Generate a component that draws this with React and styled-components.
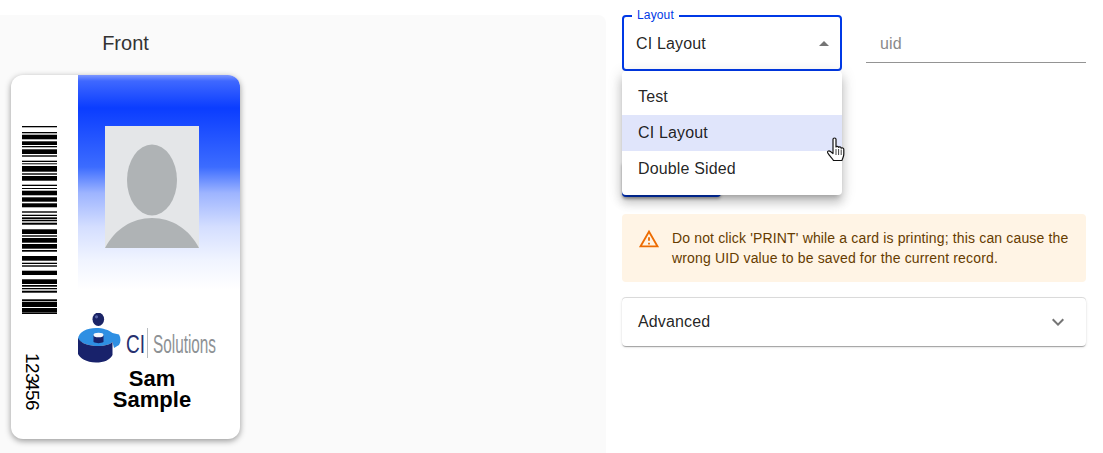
import React from 'react';
import styled, { createGlobalStyle } from 'styled-components';

const GlobalStyle = createGlobalStyle`
  html, body {
    margin: 0;
    padding: 0;
    background: #fff;
    font-family: "Liberation Sans", Arial, sans-serif;
    overflow: hidden;
  }
  * { box-sizing: border-box; }
`;

const Page = styled.div`
  display: flex;
  width: 1103px;
  height: 453px;
  padding-top: 15px;
`;

const PreviewPanel = styled.section`
  width: 606px;
  height: 438px;
  background: #fafafa;
  border-top-right-radius: 8px;
  padding: 13px 0 0 11px;
`;

const CardColumn = styled.div`
  width: 229px;
`;

const CardTitle = styled.h2`
  margin: 0 0 17px;
  font-size: 20px;
  line-height: 30px;
  font-weight: 400;
  text-align: center;
  color: #333;
`;

const Card = styled.div`
  display: grid;
  grid-template-columns: 67px 162px;
  height: 364px;
  background: #fff;
  border-radius: 12px;
  overflow: hidden;
  box-shadow: 0 2px 6px rgba(0, 0, 0, 0.4);
`;

const StubColumn = styled.div`
  display: flex;
  flex-direction: column;
  align-items: flex-start;
  padding: 51px 0 0 11px;
`;

const NumberText = styled.div`
  margin: 39px 0 0 2px;
  writing-mode: vertical-rl;
  font-size: 19px;
  line-height: 16px;
  color: #000;
  letter-spacing: -0.6px;
  span { margin-top: -3px; }
`;

const MainColumn = styled.div`
  display: flex;
  flex-direction: column;
  align-items: flex-start;
`;

const Banner = styled.div`
  width: 100%;
  height: 215px;
  padding: 51px 14px 0 0;
  display: flex;
  justify-content: center;
  align-items: flex-start;
  background: linear-gradient(
    #7d97ff 0,
    #3f68ff 6px,
    #0b3dff 33px,
    #3c6cff 92px,
    #9db4ff 118px,
    #d4deff 152px,
    #f0f4ff 185px,
    #fff 215px
  );
`;

const LogoSlot = styled.div`
  height: 55px;
  margin-top: 23px;
  svg { display: block; }
`;

const Name = styled.div`
  width: 148px;
  font-weight: 700;
  font-size: 22px;
  line-height: 21px;
  text-align: center;
  color: #000;
`;

const FormColumn = styled.section`
  position: relative;
  width: 464px;
  margin-left: 16px;
  color: rgba(0, 0, 0, 0.87);
  letter-spacing: 0.15px;
`;

const FieldRow = styled.div`
  display: flex;
  gap: 24px;
`;

const SelectField = styled.div`
  position: relative;
  width: 220px;
  height: 56px;
  border: 2px solid #0039e6;
  border-radius: 4px;
  display: flex;
  align-items: center;
  justify-content: space-between;
  padding: 1px 11px 0 12px;
  font-size: 16px;
`;

const FieldLabel = styled.label`
  position: absolute;
  top: -9px;
  left: 8px;
  padding: 0 5px;
  background: #fff;
  font-size: 12px;
  line-height: 14px;
  color: #0039e6;
`;

const Caret = styled.span`
  width: 0;
  height: 0;
  margin-top: -1px;
  border-left: 5px solid transparent;
  border-right: 5px solid transparent;
  border-bottom: 5px solid #757575;
`;

const TextField = styled.div`
  width: 220px;
  height: 48px;
  border-bottom: 1px solid #949494;
  padding: 19px 14px 0;
  font-size: 16px;
  line-height: 19px;
  color: #8a8a8a;
`;

const PrintButton = styled.button`
  display: block;
  width: 99px;
  height: 36px;
  margin-top: 90px;
  border: 0;
  border-radius: 4px;
  background: #0036c9;
  box-shadow: 0 2px 3px rgba(0, 0, 0, 0.3);
`;

const Alert = styled.div`
  display: flex;
  gap: 12px;
  height: 68px;
  margin-top: 17px;
  padding: 14px 16px 0 16px;
  border-radius: 4px;
  background: #fff4e5;
  color: #663c00;
  font-size: 14px;
  line-height: 20px;
  svg { flex: none; }
`;

const Accordion = styled.div`
  display: flex;
  align-items: center;
  justify-content: space-between;
  height: 48px;
  margin-top: 16px;
  padding: 0 16px;
  border-radius: 4px;
  background: #fff;
  font-size: 16px;
  box-shadow: 0 -1px 0 rgba(0, 0, 0, 0.13), 0 2px 1px -1px rgba(0, 0, 0, 0.2), 0 1px 1px 0 rgba(0, 0, 0, 0.14), 0 1px 3px 0 rgba(0, 0, 0, 0.12);
`;

const Menu = styled.ul`
  position: absolute;
  top: 56px;
  left: 0;
  width: 220px;
  margin: 0;
  padding: 8px 0;
  list-style: none;
  background: #fff;
  border-radius: 4px;
  box-shadow: 0 5px 5px -3px rgba(0, 0, 0, 0.2), 0 8px 10px 1px rgba(0, 0, 0, 0.14), 0 3px 14px 2px rgba(0, 0, 0, 0.12);
`;

const MenuItem = styled.li`
  height: 36px;
  padding: 0 16px;
  font-size: 16px;
  line-height: 36px;
  background: ${(p) => (p.$active ? '#e0e5fb' : 'transparent')};
`;

const HandCursor = styled.svg`
  position: absolute;
  top: 122px;
  left: 205px;
`;

// [top, height] of each barcode stripe, in px from the top of the code
const BARS = [
  [0, 1.3], [6, 1.3], [8.7, 4.6], [15.3, 3.7], [20, 1.3], [23.3, 4.7], [29.3, 1.4], [34.7, 1.3],
  [37.3, 1], [40, 5.7], [47.3, 1.4], [50, 4.7], [58.7, 1.3], [62, 1], [64.7, 4.6], [71.3, 4.4],
  [77.3, 4], [85.3, 1.4], [88.7, 1.3], [91.3, 2], [94, 1.3], [96.7, 2], [103.3, 4.7], [109.3, 1.4],
  [112, 4.7], [118, 4.7], [124, 1.7], [130, 4.7], [136.7, 1.3], [139.3, 1.4], [144.7, 4.3], [153.3, 4.7],
  [159, 1.7], [162, 1.3], [164.7, 2], [173.3, 2], [176, 5], [182, 4.7], [187, 1],
];

const Barcode = () => (
  <svg width="35" height="188" viewBox="0 0 35 188">
    {BARS.map(([y, h], i) => (
      <rect key={i} x="0" y={y} width="35" height={h} fill="#000" />
    ))}
  </svg>
);

const Portrait = () => (
  <svg width="94" height="122" viewBox="0 0 94 122">
    <rect width="94" height="122" fill="#e4e6e8" />
    <ellipse cx="47" cy="54" rx="25" ry="35.5" fill="#afb3b5" />
    <path d="M0 122 C10 103 27 92 47 92 C67 92 84 103 94 122 Z" fill="#afb3b5" />
  </svg>
);

const Logo = () => (
  <svg width="142" height="55" viewBox="0 0 142 55">
    <ellipse cx="20.300" cy="6.300" rx="5.800" ry="6.700" fill="#1b2466" />
    <circle cx="18.500" cy="3.800" r="1.600" fill="#5a66a8" />
    <path d="M0 25.500 C1 19 9 15 18 15 C25 15 31 17 34.500 20 L41 21.500 C43 25 43 29 41 32 L36 35 L34.500 29 C33 31 27 33 20 33 C12 33 3 31 0 25.500 Z" fill="#2e8fe3" />
    <path d="M0 25 C3 31 12 33 20 33 C27 33 33 31 34.500 29 V42 C32 47 26 49.500 18 49.500 C8 49.500 2 45 0 41 Z" fill="#18226b" />
    <path d="M15.500 22 H25.500 V29 C23 30.500 18 30.500 15.500 29 Z" fill="#18226b" />
    <ellipse cx="20.500" cy="22" rx="5" ry="2.300" fill="#f4f6fa" />
    <text transform="translate(48 40) scale(0.76 1)" fontFamily="Liberation Sans, sans-serif" fontSize="25" fill="#27306f">CI</text>
    <rect x="69" y="15" width="1" height="30" fill="#b8bcc0" />
    <text transform="translate(75 40) scale(0.613 1)" fontFamily="Liberation Sans, sans-serif" fontSize="25" fill="#8d9194">Solutions</text>
  </svg>
);

const App = () => (
  <>
    <GlobalStyle />
    <Page>
      <PreviewPanel>
        <CardColumn>
          <CardTitle>Front</CardTitle>
          <Card>
            <StubColumn>
              <Barcode />
              <NumberText>
                123<span>456</span>
              </NumberText>
            </StubColumn>
            <MainColumn>
              <Banner>
                <Portrait />
              </Banner>
              <LogoSlot>
                <Logo />
              </LogoSlot>
              <Name>
                Sam
                <br />
                Sample
              </Name>
            </MainColumn>
          </Card>
        </CardColumn>
      </PreviewPanel>
      <FormColumn>
        <FieldRow>
          <SelectField>
            <FieldLabel>Layout</FieldLabel>
            CI Layout
            <Caret />
          </SelectField>
          <TextField>uid</TextField>
        </FieldRow>
        <PrintButton aria-label="Print" />
        <Alert>
          <svg width="22" height="22" viewBox="0 0 24 24" fill="#ed6c02">
            <path d="M12 5.99L19.53 19H4.47L12 5.99M12 2L1 21h22L12 2zm1 14h-2v2h2v-2zm0-6h-2v4h2v-4z" />
          </svg>
          <span>
            Do not click 'PRINT' while a card is printing; this can cause the wrong UID value to be saved for the current record.
          </span>
        </Alert>
        <Accordion>
          Advanced
          <svg width="24" height="24" viewBox="0 0 24 24" fill="#757575">
            <path d="M16.59 8.59 12 13.17 7.41 8.59 6 10l6 6 6-6z" />
          </svg>
        </Accordion>
        <Menu>
          <MenuItem>Test</MenuItem>
          <MenuItem $active>CI Layout</MenuItem>
          <MenuItem>Double Sided</MenuItem>
        </Menu>
        <HandCursor width="18" height="25" viewBox="0 0 18 25">
          <path
            d="M6 2.200 C6 0.600 9 0.600 9 2.200 V10 C9.500 9 11.300 9 11.600 10.300 C12.300 9.500 14 9.800 14.200 11.200 C15 10.600 16.800 11 16.800 12.500 V17 C16.800 20 15.500 21 15 23.500 H6.500 C5.500 21.500 2.500 19 0.800 16 C0 14.500 1.500 13 3.500 14.500 L6 16.500 Z"
            fill="#fff"
            stroke="#111"
            strokeWidth="1.200"
            strokeLinejoin="round"
          />
          <path d="M9 12 V18 M11.600 12 V18 M14.200 12.500 V18" stroke="#111" strokeWidth="0.800" fill="none" />
        </HandCursor>
      </FormColumn>
    </Page>
  </>
);

export default App;
